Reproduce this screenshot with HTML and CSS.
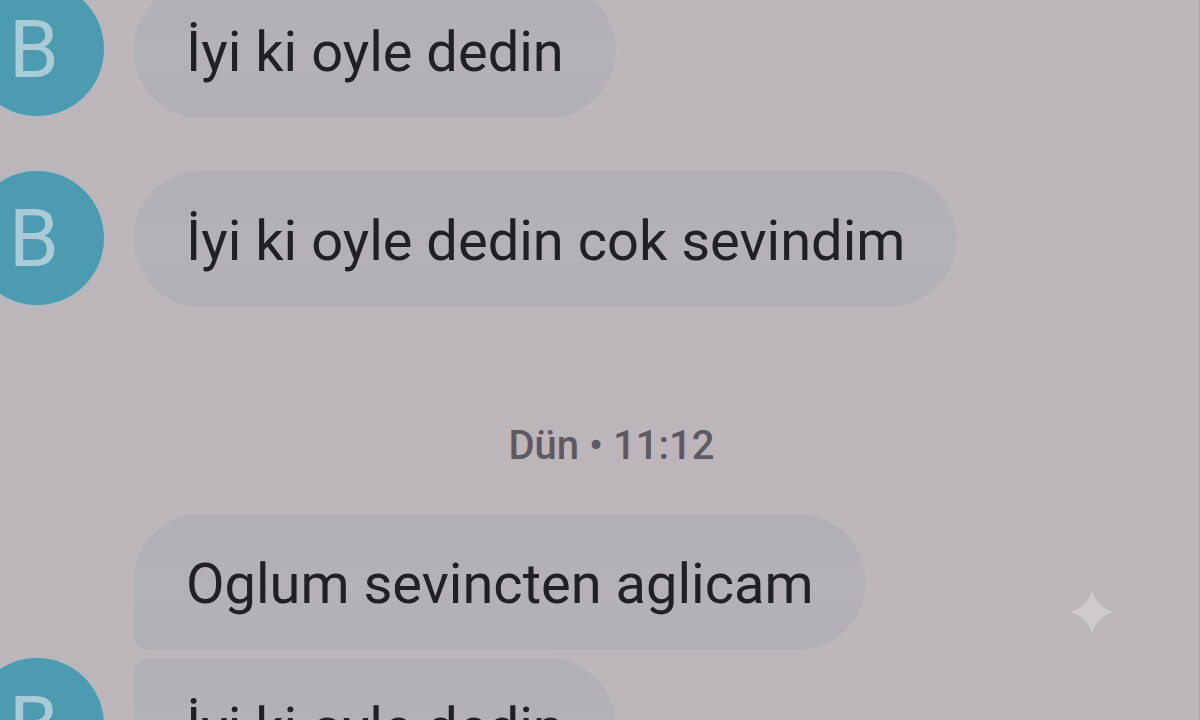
FILE: index.html
```
<!DOCTYPE html>
<html lang="tr">
<head>
<meta charset="utf-8">
<meta name="viewport" content="width=device-width, initial-scale=1">
<title>Mesajlar</title>
<link rel="stylesheet" href="styles.css">
</head>
<body>
<main class="chat">
  <div class="row">
    <div class="avatar">B</div>
    <p class="bubble">İyi ki oyle dedin</p>
  </div>
  <div class="row row-spaced">
    <div class="avatar">B</div>
    <p class="bubble">İyi ki oyle dedin cok sevindim</p>
  </div>
  <time class="stamp">Dün • 11:12</time>
  <div class="row">
    <p class="bubble bubble-first">Oglum sevincten aglicam</p>
  </div>
  <div class="row row-joined">
    <div class="avatar">B</div>
    <p class="bubble bubble-last">İyi ki oyle dedin</p>
  </div>
</main>
<svg class="sparkle" viewBox="0 0 44 44" aria-hidden="true"><path d="M22 0C25 11 33 19 44 22C33 25 25 33 22 44C19 33 11 25 0 22C11 19 19 11 22 0Z"/></svg>
</body>
</html>
```
FILE: styles.css
```
* {
  box-sizing: border-box;
}

body {
  margin: 0;
  height: 100vh;
  overflow: hidden;
  position: relative;
  background: #bcb6bb;
  border-right: 1px solid #aea8ae;
  color: #202025;
  font-family: Roboto, "Noto Sans", sans-serif;
}

.chat {
  display: flex;
  flex-direction: column;
  margin-top: -18px;
}

.row {
  display: grid;
  grid-template-columns: 134px auto;
  justify-content: start;
  align-items: start;
  column-gap: 29px;
  margin-left: -30px;
}

.row-spaced {
  margin-top: 53px;
}

.row-joined {
  margin-top: 8px;
}

.avatar {
  display: grid;
  place-items: center;
  width: 134px;
  height: 134px;
  padding: 2px 6px 0 0;
  border-radius: 50%;
  background: #4c9bb0;
  box-shadow: 0 0 2px 1px #a9bdc7;
  color: #a9cbd8;
  font-size: 80px;
  line-height: 1;
}

.bubble {
  grid-column: 2;
  margin: 0;
  padding: 36px 52px 32px 53px;
  border-radius: 68px;
  background: linear-gradient(#b1afb3, #b4b2b7 55%, #b1afb3);
  box-shadow: 0 0 3px 1px #c0babe;
  font-size: 56px;
  line-height: 68px;
}

.bubble-first {
  border-bottom-left-radius: 16px;
}

.bubble-last {
  border-top-left-radius: 16px;
}

.stamp {
  margin: 111px 0 41px 24px;
  text-align: center;
  color: #5d5a62;
  font-size: 40px;
  font-weight: 500;
  line-height: 55px;
}

.sparkle {
  position: absolute;
  right: 85px;
  bottom: 86px;
  width: 44px;
  height: 44px;
  fill: #cdc9cc;
}
```
